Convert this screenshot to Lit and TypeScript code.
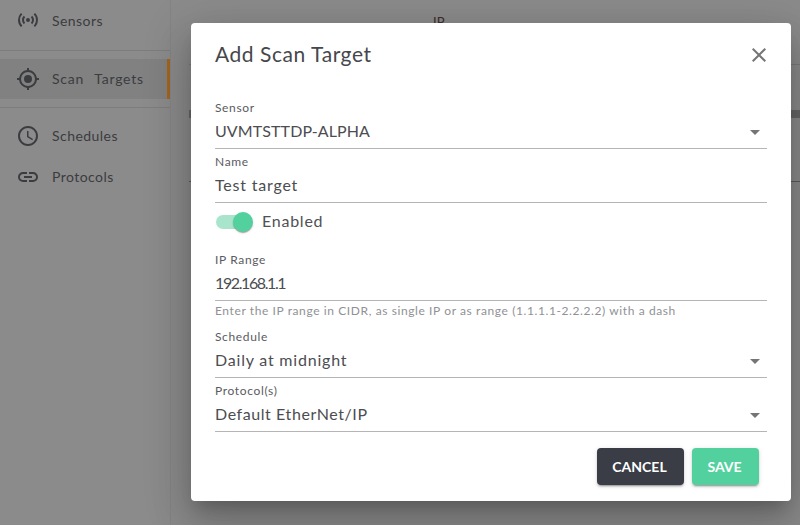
import { LitElement, html, css } from "lit";
import { customElement } from "lit/decorators.js";

const caret = html`<svg class="caret" width="24" height="24" viewBox="0 0 24 24"><path d="M7 10l5 5 5-5z" fill="#757575"/></svg>`;

const field = (label: string, value: string, select: boolean, kind = "") => html`
  <div class="field">
    <div class="label">${label}</div>
    <div class="value"><span class=${kind}>${value}</span>${select ? caret : ""}</div>
  </div>`;

@customElement("app-root")
export class AppRoot extends LitElement {
  static styles = css`
    :host { display: block; width: 800px; height: 525px; position: relative; overflow: hidden; font-family: "Lato", "Open Sans", sans-serif; color: #3e3f45; background: #8b8b8b; }
    .page { display: flex; height: 525px; }
    .side { width: 170px; flex: none; display: flex; flex-direction: column; }
    .item { display: flex; align-items: center; height: 41px; font-size: 14px; letter-spacing: 0.45px; color: #3b3c3f; }
    .item svg { width: 24px; height: 24px; margin-left: 16px; margin-right: 12px; flex: none; }
    .first { height: 40px; flex: none; margin-bottom: 2px; }
    .sep { height: 1px; background: #7d7d7d; flex: none; }
    .gap8 { height: 8px; flex: none; }
    .active { background: #818181; box-shadow: inset -3px 0 0 #a4651e; height: 40px; box-sizing: border-box; padding-bottom: 2px; word-spacing: 6px; letter-spacing: 0.8px; flex: none; }
    .active svg { margin-bottom: -2px; }
    .gap16 { height: 8px; flex: none; }
    .gap7 { height: 7px; flex: none; }
    .main { flex: 1; display: flex; flex-direction: column; background: #8b8b8b; border-left: 1px solid #848484; padding-left: 18px; }
    .th { height: 65px; box-sizing: border-box; padding: 14px 0 0 244px; font-size: 13px; color: #3c2a2a; border-bottom: 1px solid #7a7a7a; }
    .band { height: 8px; margin-top: 45px; background: #666; flex: none; }
    .row { height: 64px; flex: none; border-bottom: 1px solid #5c5c5c; box-sizing: border-box; }
    .dialog { position: absolute; left: 191px; top: 23px; width: 600px; height: 478px; box-sizing: border-box; padding: 0 24px; background: #fff; border-radius: 4px; box-shadow: 0 11px 15px -7px rgba(0,0,0,.2), 0 24px 38px 3px rgba(0,0,0,.14), 0 9px 46px 8px rgba(0,0,0,.12); display: flex; flex-direction: column; }
    .title { height: 72px; flex: none; box-sizing: border-box; padding-top: 18px; display: flex; align-items: flex-start; justify-content: space-between; font-size: 21px; line-height: 26px; letter-spacing: 0.55px; color: #46474c; }
    .close { width: 24px; height: 24px; margin-right: -4px; margin-top: 2px; }
    .field { height: 54px; flex: none; box-sizing: border-box; border-bottom: 1px solid #b5b5b5; display: flex; flex-direction: column; }
    .label { font-size: 12px; letter-spacing: 0.65px; line-height: 16px; padding-top: 5px; color: #5a5b5f; }
    .value { display: flex; justify-content: space-between; align-items: center; font-size: 16px; letter-spacing: 0.8px; line-height: 24px; padding-top: 3px; color: #4c4d51; position: relative; }
    .caps { letter-spacing: 0.1px; }
    .ip { letter-spacing: -1.4px; }
    .tight { letter-spacing: 0.58px; }
    .caret { position: absolute; right: 0; top: 4px; }
    .toggle { height: 44px; flex: none; display: flex; align-items: flex-start; padding-top: 8px; box-sizing: border-box; font-size: 16px; letter-spacing: 0.75px; color: #505155; }
    .track { width: 34px; height: 14px; border-radius: 7px; background: #a9e5cd; position: relative; margin: 4px 12px 0 1px; flex: none; }
    .thumb { position: absolute; right: -3px; top: -3px; width: 20px; height: 20px; border-radius: 50%; background: #52d19e; box-shadow: 0 2px 1px -1px rgba(0,0,0,.2), 0 1px 1px 0 rgba(0,0,0,.14), 0 1px 3px 0 rgba(0,0,0,.12); }
    .help { height: 23px; flex: none; font-size: 12px; letter-spacing: 0.6px; line-height: 20px; color: #909195; }
    .actions { display: flex; justify-content: flex-end; gap: 8px; padding: 16px 8px 0 0; }
    button { height: 37px; border: 0; border-radius: 4px; font-family: "Lato", sans-serif; font-weight: 700; font-size: 14px; color: #fff; box-shadow: 0 3px 1px -2px rgba(0,0,0,.2), 0 2px 2px 0 rgba(0,0,0,.14), 0 1px 5px 0 rgba(0,0,0,.12); padding: 0 2px 0 0; }
    .cancel { width: 87px; background: #3a3d46; }
    .save { width: 67px; background: #52d19e; }
  `;
  render() {
    return html`
      <div class="page">
        <nav class="side">
          <div class="item first">
            <svg viewBox="0 0 24 24" fill="#3b3c3f"><path d="M7.76 16.24A6 6 0 0 1 6 12c0-1.66.67-3.16 1.76-4.24l1.42 1.42A4 4 0 0 0 8 12c0 1.1.45 2.1 1.17 2.83l-1.41 1.41zm8.48 0A6 6 0 0 0 18 12c0-1.66-.67-3.16-1.76-4.24l-1.42 1.42A4 4 0 0 1 16 12c0 1.1-.45 2.1-1.17 2.83l1.41 1.41zM12 10a2 2 0 1 0 0 4 2 2 0 0 0 0-4zm8 2c0 2.21-.9 4.21-2.35 5.65l1.42 1.42A9.97 9.97 0 0 0 22 12c0-2.76-1.12-5.26-2.93-7.07l-1.42 1.42A7.94 7.94 0 0 1 20 12zM6.35 6.35 4.93 4.93A9.97 9.97 0 0 0 2 12c0 2.76 1.12 5.26 2.93 7.07l1.42-1.42A7.94 7.94 0 0 1 4 12c0-2.21.9-4.21 2.35-5.65z"/></svg>
            Sensors
          </div>
          <div class="gap8"></div>
          <div class="sep"></div>
          <div class="gap8"></div>
          <div class="item active">
            <svg viewBox="0 0 24 24" fill="#3b3c3f"><path d="M12 8a4 4 0 1 0 0 8 4 4 0 0 0 0-8zm8.94 3A8.99 8.99 0 0 0 13 3.06V1h-2v2.06A8.99 8.99 0 0 0 3.06 11H1v2h2.06A8.99 8.99 0 0 0 11 20.94V23h2v-2.06A8.99 8.99 0 0 0 20.94 13H23v-2h-2.06zM12 19a7 7 0 1 1 0-14 7 7 0 0 1 0 14z"/></svg>
            Scan Targets
          </div>
          <div class="gap16"></div>
          <div class="sep"></div>
          <div class="gap7"></div>
          <div class="item">
            <svg viewBox="0 0 24 24" fill="#3b3c3f"><path d="M11.99 2C6.47 2 2 6.48 2 12s4.47 10 9.99 10C17.52 22 22 17.52 22 12S17.52 2 11.99 2zM12 20a8 8 0 1 1 0-16 8 8 0 0 1 0 16zm.5-13H11v6l5.25 3.15.75-1.23-4.5-2.67z"/></svg>
            Schedules
          </div>
          <div class="item">
            <svg viewBox="0 0 24 24" fill="#3b3c3f"><path d="M3.9 12c0-1.71 1.39-3.1 3.1-3.1h4V7H7a5 5 0 0 0 0 10h4v-1.9H7c-1.71 0-3.1-1.39-3.1-3.1zM8 13h8v-2H8v2zm9-6h-4v1.9h4c1.71 0 3.1 1.39 3.1 3.1s-1.39 3.1-3.1 3.1h-4V17h4a5 5 0 0 0 0-10z"/></svg>
            Protocols
          </div>
        </nav>
        <main class="main">
          <div class="th">IP</div>
          <div class="band"></div>
          <div class="row"></div>
        </main>
      </div>
      <section class="dialog">
        <header class="title">
          <span>Add Scan Target</span>
          <svg class="close" viewBox="0 0 24 24"><path fill="#757575" d="M19 6.41 17.59 5 12 10.59 6.41 5 5 6.41 10.59 12 5 17.59 6.41 19 12 13.41 17.59 19 19 17.59 13.41 12z"/></svg>
        </header>
        ${field("Sensor", "UVMTSTTDP-ALPHA", true, "caps")}
        ${field("Name", "Test target", false)}
        <div class="toggle"><div class="track"><div class="thumb"></div></div>Enabled</div>
        ${field("IP Range", "192.168.1.1", false, "ip")}
        <div class="help">Enter the IP range in CIDR, as single IP or as range (1.1.1.1-2.2.2.2) with a dash</div>
        ${field("Schedule", "Daily at midnight", true)}
        ${field("Protocol(s)", "Default EtherNet/IP", true, "tight")}
        <div class="actions">
          <button class="cancel">CANCEL</button>
          <button class="save">SAVE</button>
        </div>
      </section>`;
  }
}
